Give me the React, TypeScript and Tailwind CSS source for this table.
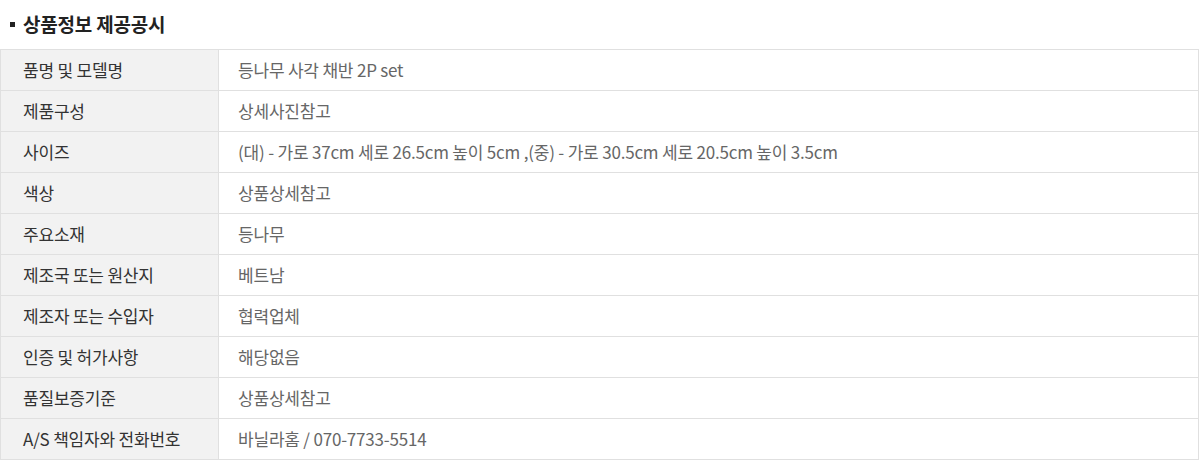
import React from "react";

const rows: [string, string][] = [
  ["품명 및 모델명", "등나무 사각 채반 2P set"],
  ["제품구성", "상세사진참고"],
  ["사이즈", "(대) - 가로 37cm 세로 26.5cm 높이 5cm ,(중) - 가로 30.5cm 세로 20.5cm 높이 3.5cm"],
  ["색상", "상품상세참고"],
  ["주요소재", "등나무"],
  ["제조국 또는 원산지", "베트남"],
  ["제조자 또는 수입자", "협력업체"],
  ["인증 및 허가사항", "해당없음"],
  ["품질보증기준", "상품상세참고"],
  ["A/S 책임자와 전화번호", "바닐라홈 / 070-7733-5514"],
];

export default function App() {
  return (
    <div
      className="w-[1200px] h-[475px] bg-white"
      style={{ fontFamily: '"Noto Sans CJK KR", "Noto Sans", sans-serif' }}
    >
      <div className="h-[49px] flex items-center pl-[10px] pb-[1px]">
        <span className="w-[5px] h-[5px] bg-[#222] mr-[8px]" />
        <span className="text-[19px] font-bold text-[#222] tracking-[-0.2px]">상품정보 제공공시</span>
      </div>
      <table className="w-[1199px] border-collapse text-[17px]">
        <tbody>
          {rows.map(([k, v]) => (
            <tr key={k} className="h-[41px]">
              <th className="w-[218px] bg-[#f2f2f2] border border-[#e0e0e0] text-left font-normal text-[#333] pl-[22px] py-0 tracking-[-0.2px]">
                {k}
              </th>
              <td className="border border-[#e0e0e0] text-left text-[#666] pl-[19px] py-0 tracking-[-0.2px]">
                {v}
              </td>
            </tr>
          ))}
        </tbody>
      </table>
    </div>
  );
}
